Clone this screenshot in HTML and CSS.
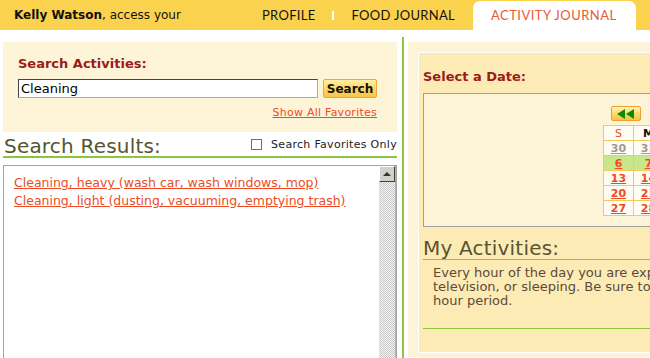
FILE: index.html
```
<!DOCTYPE html>
<html>
<head>
<meta charset="utf-8">
<link rel="stylesheet" href="styles.css">
</head>
<body>
<header class="topbar">
  <div class="greeting"><b>Kelly Watson</b>, access your</div>
  <nav class="tabs">
    <a class="tab">PROFILE</a>
    <span class="sep"></span>
    <a class="tab">FOOD JOURNAL</a>
    <a class="tab active">ACTIVITY JOURNAL</a>
  </nav>
</header>
<div class="main">
  <section class="left">
    <div class="search-panel">
      <div class="label">Search Activities:</div>
      <div class="search-row">
        <input class="search-input" type="text" value="Cleaning">
        <button class="btn">Search</button>
      </div>
      <div class="fav-row"><a class="fav-link" href="#">Show All Favorites</a></div>
    </div>
    <div class="results-head">
      <h2 class="heading">Search Results:</h2>
      <label class="fav-only"><span class="checkbox"></span>Search Favorites Only</label>
    </div>
    <div class="results">
      <div class="list">
        <a class="result" href="#">Cleaning, heavy (wash car, wash windows, mop)</a>
        <a class="result" href="#">Cleaning, light (dusting, vacuuming, emptying trash)</a>
      </div>
      <div class="scrollbar">
        <div class="sb-up"><span class="sb-arrow"></span></div>
        <div class="sb-track"></div>
      </div>
    </div>
  </section>
  <div class="divider"></div>
  <section class="right">
    <div class="inner">
      <div class="label date-label">Select a Date:</div>
      <div class="cal-box">
        <div class="cal-nav">
          <span class="cal-btn">
            <svg width="20" height="10" viewBox="0 0 20 10"><path d="M1 5 L9 0 L9 10 Z M10 5 L18 0 L18 10 Z" fill="#0a8a0a"/></svg>
          </span>
        </div>
        <table class="cal">
          <tr class="dow"><td class="sun">S</td><td>M</td><td>T</td><td>W</td><td>T</td><td>F</td><td>S</td></tr>
          <tr class="other"><td><a href="#">30</a></td><td><a href="#">31</a></td><td><a href="#">1</a></td><td><a href="#">2</a></td><td><a href="#">3</a></td><td><a href="#">4</a></td><td><a href="#">5</a></td></tr>
          <tr class="current"><td><a href="#">6</a></td><td><a href="#">7</a></td><td><a href="#">8</a></td><td><a href="#">9</a></td><td><a href="#">10</a></td><td><a href="#">11</a></td><td><a href="#">12</a></td></tr>
          <tr><td><a href="#">13</a></td><td><a href="#">14</a></td><td><a href="#">15</a></td><td><a href="#">16</a></td><td><a href="#">17</a></td><td><a href="#">18</a></td><td><a href="#">19</a></td></tr>
          <tr><td><a href="#">20</a></td><td><a href="#">21</a></td><td><a href="#">22</a></td><td><a href="#">23</a></td><td><a href="#">24</a></td><td><a href="#">25</a></td><td><a href="#">26</a></td></tr>
          <tr><td><a href="#">27</a></td><td><a href="#">28</a></td><td><a href="#">29</a></td><td><a href="#">30</a></td><td><a href="#">31</a></td><td><a href="#">1</a></td><td><a href="#">2</a></td></tr>
        </table>
      </div>
      <h2 class="heading act-heading">My Activities:</h2>
      <p class="intro">Every hour of the day you are expending energy, whether you are exercising, watching<br>television, or sleeping. Be sure to include all of your activities for each 24<br>hour period.</p>
    </div>
  </section>
</div>
</body>
</html>
```
FILE: styles.css
```
* { box-sizing: border-box; }
html, body { margin: 0; padding: 0; }
body {
  width: 650px;
  height: 358px;
  overflow: hidden;
  background: #fff;
  font-family: "DejaVu Sans", Verdana, sans-serif;
  font-size: 13px;
  color: #222;
}
.topbar {
  height: 30px;
  background: #fad24e;
  display: flex;
  align-items: stretch;
}
.greeting {
  width: 262px;
  padding-left: 14px;
  font-size: 12px;
  line-height: 30px;
  color: #111;
  white-space: nowrap;
}
.tabs {
  display: flex;
  align-items: stretch;
}
.tab {
  font-family: Lato, "Open Sans", sans-serif;
  font-size: 13px;
  color: #111;
  letter-spacing: 0.3px;
  line-height: 30px;
  white-space: nowrap;
}
.sep {
  width: 2px;
  height: 9px;
  background: #fff;
  align-self: center;
  margin: 1px 18px 0 16px;
}
.tab.active {
  margin-left: 18px;
  margin-top: 1px;
  padding: 0 19px 0 18px;
  letter-spacing: 0.45px;
  line-height: 29px;
  background: #fff;
  color: #e85b36;
  border-radius: 7px 7px 0 0;
}
.main {
  display: flex;
  padding-top: 7px;
  height: 328px;
}
.left {
  width: 394px;
  margin-left: 3px;
  margin-top: 5px;
  flex: none;
  display: flex;
  flex-direction: column;
}
.search-panel {
  background: #fdf4d8;
  height: 90px;
  padding: 14px 20px 0 15px;
}
.label {
  font-weight: bold;
  color: #9c1b1b;
  font-size: 13px;
  line-height: 16px;
}
.search-row {
  display: flex;
  margin-top: 7px;
  gap: 5px;
}
.search-input {
  width: 300px;
  height: 19px;
  margin: 0;
  border: 1px solid #aaa;
  border-top-color: #444;
  border-left-color: #444;
  padding: 0 2px;
  font-family: "DejaVu Sans", Verdana, sans-serif;
  font-size: 13px;
  color: #000;
  background: #fff;
}
.btn {
  width: 54px;
  height: 19px;
  margin: 0;
  padding: 0;
  border: 1px solid #f0a638;
  border-radius: 2px;
  background: linear-gradient(#fff0a8, #fbd560 55%, #f7c545);
  font-family: "DejaVu Sans", Verdana, sans-serif;
  font-size: 12px;
  font-weight: bold;
  color: #111;
}
.fav-row {
  display: flex;
  justify-content: flex-end;
  margin-top: 8px;
}
.fav-link, .result {
  color: #ee4b25;
  text-decoration: underline;
}
.fav-link { font-size: 11px; letter-spacing: 0.25px; }
.results-head {
  display: flex;
  align-items: flex-end;
  justify-content: space-between;
  height: 26px;
  border-bottom: 2px solid #8cc63f;
  padding-left: 1px;
}
.heading {
  margin: 0;
  font-weight: normal;
  font-size: 20px;
  line-height: 20px;
  color: #575530;
  letter-spacing: 0.2px;
}
.fav-only {
  display: flex;
  align-items: center;
  font-size: 11px;
  letter-spacing: 0.3px;
  color: #222;
  height: 20px;
  margin-bottom: 2px;
}
.checkbox {
  width: 11px;
  height: 11px;
  border: 1px solid #707070;
  background: #fff;
  margin-right: 9px;
}
.results {
  margin-top: 7px;
  flex: 1;
  display: flex;
  border: 1px solid #a4a4a4;
  border-bottom: none;
}
.list {
  flex: 1;
  padding: 8px 10px;
  display: flex;
  flex-direction: column;
  line-height: 18px;
  font-size: 12.5px;
  align-items: flex-start;
}
.scrollbar {
  width: 16px;
  display: flex;
  flex-direction: column;
  border-right: 1px solid #b0b0b0;
  box-sizing: content-box;
}
.sb-up {
  height: 16px;
  background: #d4d0c8;
  border: 1px solid;
  border-color: #fff #404040 #404040 #fff;
  display: flex;
  align-items: center;
  justify-content: center;
}
.sb-arrow {
  width: 0;
  height: 0;
  border-left: 4px solid transparent;
  border-right: 4px solid transparent;
  border-bottom: 4px solid #333;
}
.sb-track {
  flex: 1;
  background: repeating-conic-gradient(#c8c8c8 0 25%, #f4f4f4 0 50%) 0 0 / 2px 2px;
}
.divider {
  width: 2px;
  margin-left: 5px;
  background: #8cc63f;
  flex: none;
}
.right {
  flex: none;
  width: 420px;
  margin-left: 4px;
  margin-top: 5px;
  height: 315px;
  background: #fdf4d8;
  padding: 10px 0 4px 10px;
}
.inner {
  height: 301px;
  border: 1px solid #fff;
  background: #fdebb6;
  padding: 0 0 0 4px;
}
.date-label {
  margin-top: 16px;
}
.cal-box {
  margin-top: 8px;
  height: 134px;
  border: 1px solid #a0a0a0;
  background: #fdf4d8;
  padding: 12px 0 0 179px;
}
.cal-nav {
  height: 19px;
  padding-left: 8px;
}
.cal-btn {
  display: flex;
  align-items: center;
  justify-content: center;
  width: 30px;
  height: 15px;
  border: 1px solid #f0a030;
  border-radius: 2px;
  background: linear-gradient(#fff6b0, #fbd560 60%, #f6c447);
}
.cal {
  border-collapse: collapse;
  background: #fffdf3;
}
.cal td {
  width: 30px;
  height: 15px;
  padding: 0;
  border: 1px solid #f5c956;
  text-align: center;
  font-size: 11px;
  line-height: 13px;
  font-weight: bold;
}
.cal a { color: #ee4b25; }
.cal .dow td { font-weight: bold; color: #111; }
.cal .dow td.sun { color: #ee4b25; font-weight: normal; }
.cal .other a { color: #9a9a9a; }
.cal .current td { background: #c8e68a; }
.act-heading {
  margin-top: 10px;
  width: 400px;
  line-height: 22px;
  border-bottom: 1px solid #8cc63f;
  padding-bottom: 0;
}
.intro {
  margin: 0;
  width: 400px;
  padding: 6px 0 20px 10px;
  line-height: 14px;
  color: #5b4a3a;
  font-size: 13px;
  white-space: nowrap;
  border-bottom: 1px solid #8cc63f;
}
```
